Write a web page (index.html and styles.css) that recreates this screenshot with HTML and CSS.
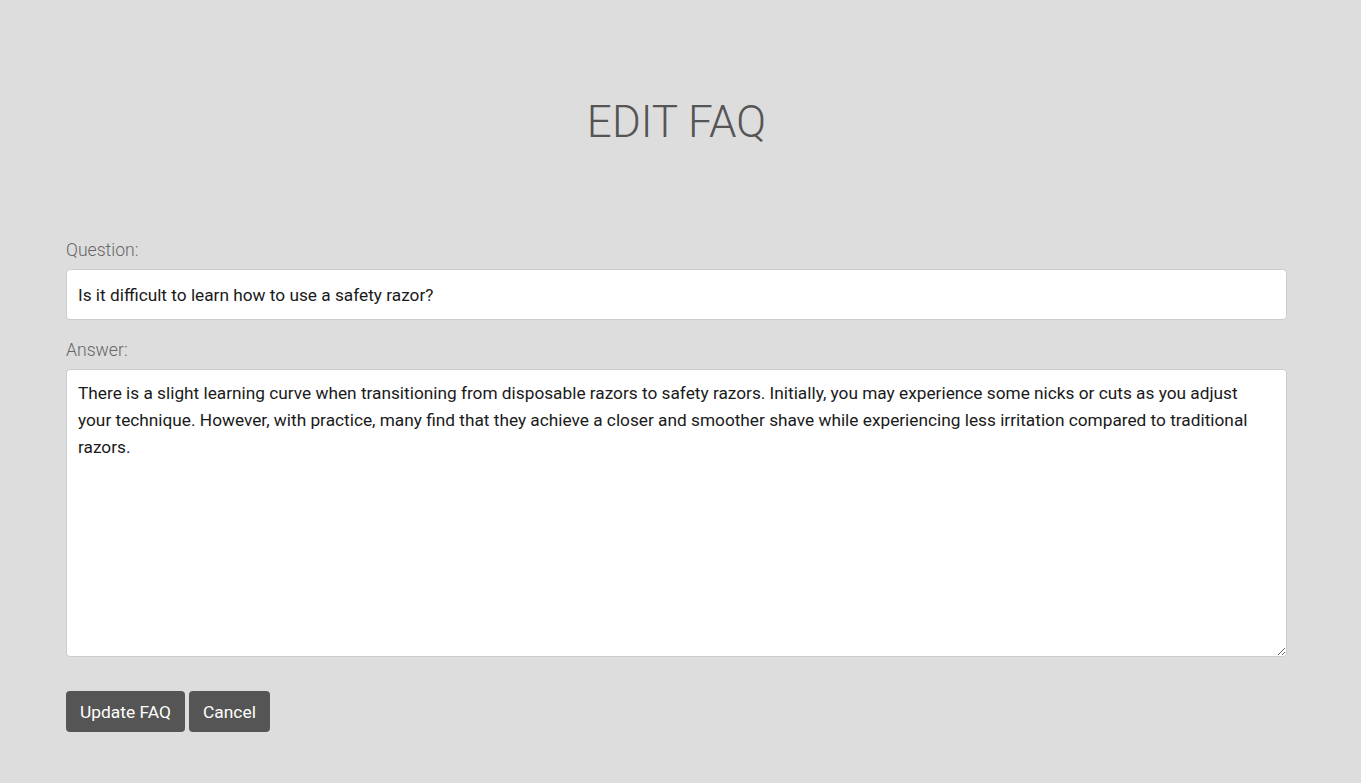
FILE: index.html
```html
<!DOCTYPE html>
<html>
<head>
<meta charset="utf-8">
<link rel="stylesheet" href="styles.css">
</head>
<body>
<main class="page">
  <h1 class="title">EDIT FAQ</h1>
  <form class="faq-form">
    <div class="field">
      <label class="label" for="q">Question:</label>
      <input class="input" id="q" type="text" value="Is it difficult to learn how to use a safety razor?">
    </div>
    <div class="field">
      <label class="label" for="a">Answer:</label>
      <textarea class="textarea" id="a">There is a slight learning curve when transitioning from disposable razors to safety razors. Initially, you may experience some nicks or cuts as you adjust your technique. However, with practice, many find that they achieve a closer and smoother shave while experiencing less irritation compared to traditional razors.</textarea>
    </div>
    <div class="actions">
      <button class="btn" type="button">Update FAQ</button>
      <button class="btn" type="button">Cancel</button>
    </div>
  </form>
</main>
</body>
</html>
```

FILE: styles.css
```css
html, body {
  margin: 0;
  padding: 0;
  background: #dddddd;
}
body {
  font-family: Roboto, "Liberation Sans", sans-serif;
  color: #222;
}
.page {
  padding: 0 74px 0 66px;
}
.title {
  margin: 0;
  padding-top: 94px;
  height: 240px;
  box-sizing: border-box;
  text-align: center;
  font-weight: 300;
  font-size: 44px;
  line-height: 56px;
  color: #555;
}
.faq-form {
  display: flex;
  flex-direction: column;
}
.field {
  display: flex;
  flex-direction: column;
  margin-bottom: 20px;
}
.label {
  font-weight: 300;
  font-size: 17.6px;
  line-height: 20px;
  color: #666;
  margin-bottom: 9px;
}
.input, .textarea {
  box-sizing: border-box;
  width: 100%;
  background: #fff;
  border: 1px solid #cccccc;
  border-radius: 4px;
  font-family: Roboto, "Liberation Sans", sans-serif;
  font-size: 17.25px;
  color: #1a1a1a;
  outline: none;
}
.input {
  height: 51px;
  padding: 0 11px;
}
.textarea {
  height: 288px;
  padding: 10px 11px;
  line-height: 27px;
  resize: vertical;
}
.actions {
  display: flex;
  gap: 4px;
  margin-top: 14px;
}
.btn {
  height: 41px;
  padding: 0 14px;
  border: none;
  border-radius: 4px;
  background: #555555;
  color: #fff;
  font-family: Roboto, "Liberation Sans", sans-serif;
  font-size: 17.4px;
  cursor: pointer;
}
```
